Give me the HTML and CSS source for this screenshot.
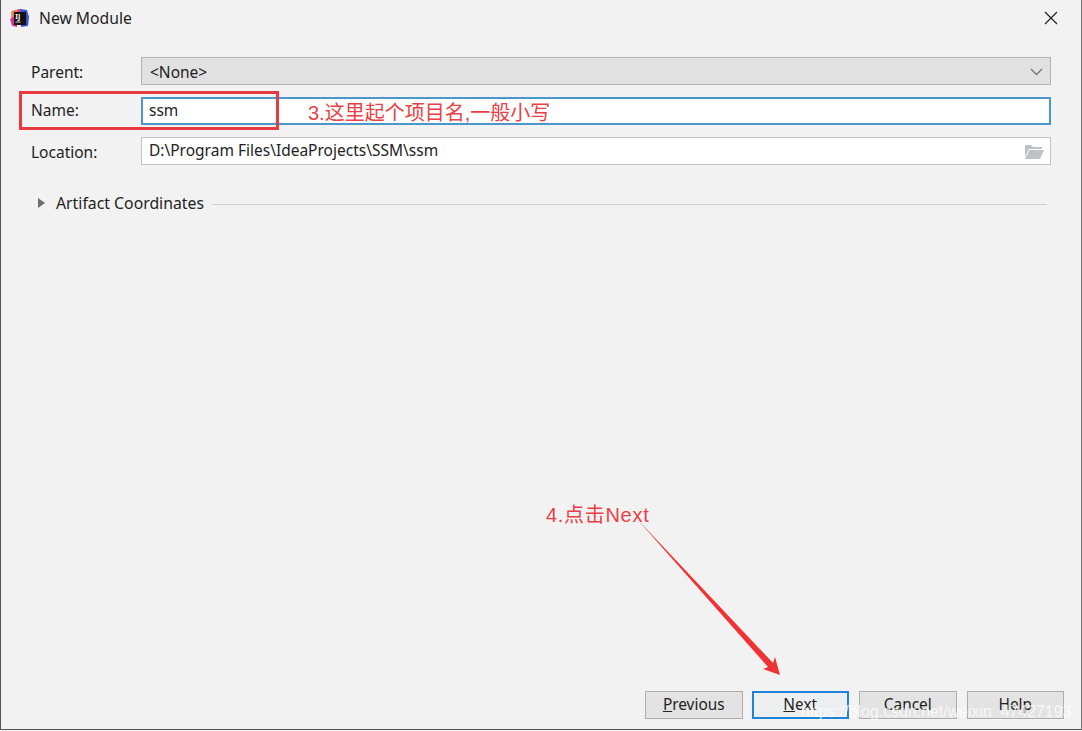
FILE: index.html
```html
<!DOCTYPE html>
<html lang="en">
<head>
    <meta charset="UTF-8">
    <meta name="viewport" content="width=device-width, initial-scale=1.0">
    <title>New Module</title>
    <link rel="stylesheet" href="styles.css">
</head>
<body>
    <div class="dialog">
        <div class="title-bar">
            <svg class="app-icon" width="21" height="21" viewBox="0 0 21 21">
                <path d="M3 3 L11 1 L12 10 L2 13 Z" fill="#f0396e"/>
                <path d="M11 1 L18 2 L20 9 L19 18 L12 19 Z" fill="#3b4fd8"/>
                <path d="M1 11 L8 9 L8 19 L3 18 Z" fill="#d6349a"/>
                <path d="M2 4 L8 2 L9 8 L3 9 Z" fill="#f7873a"/>
                <rect x="5" y="4" width="12" height="13" fill="#111"/>
                <text x="6.2" y="11" class="app-icon-text">IJ</text>
                <rect x="6.5" y="13.5" width="5" height="1" fill="#ddd"/>
            </svg>
            <span class="title">New Module</span>
            <svg class="close" width="14" height="14" viewBox="0 0 14 14">
                <path d="M1 1 L13 13 M13 1 L1 13" stroke="#222" stroke-width="1.2" fill="none"/>
            </svg>
        </div>

        <div class="form">
            <label class="label">Parent:</label>
            <div class="field field-select">
                <span>&lt;None&gt;</span>
                <svg width="13" height="8" viewBox="0 0 13 8">
                    <path d="M1 1 L6.5 6.5 L12 1" stroke="#777" stroke-width="1.4" fill="none"/>
                </svg>
            </div>
            <label class="label label-name">Name:</label>
            <div class="field field-focus"><span>ssm</span></div>
            <label class="label label-low">Location:</label>
            <div class="field">
                <span>D:\Program Files\IdeaProjects\SSM\ssm</span>
                <svg class="folder" width="20" height="15" viewBox="0 0 20 15">
                    <path d="M1 1 L7 1 L9 3 L18 3 L18 5 L5 5 L1 13 Z" fill="#bcc2c5"/>
                    <path d="M5.5 6 L20 6 L16 15 L1 15 Z" fill="#bcc2c5"/>
                </svg>
            </div>
        </div>

        <div class="artifact">
            <span class="triangle"></span>
            <span>Artifact Coordinates</span>
            <span class="rule"></span>
        </div>

        <div class="buttons">
            <button class="btn"><u>P</u>revious</button>
            <button class="btn btn-default"><u>N</u>ext</button>
            <button class="btn">Cancel</button>
            <button class="btn">Help</button>
        </div>
    </div>

    <!-- annotations drawn over the screenshot -->
    <div class="red-box"></div>
    <div class="note note-name">3.这里起个项目名,一般小写</div>
    <div class="note note-next">4.点击Next</div>
    <svg class="arrow" width="1082" height="731" viewBox="0 0 1082 731">
        <path d="M637 519 L773 663 L775 657 L780 675 L763 669 L768 667 Z" fill="#f03232"/>
    </svg>
    <div class="watermark">https://blog.csdn.net/weixin_47427193</div>
</body>
</html>
```

FILE: styles.css
```css
* {
    box-sizing: border-box;
}

body {
    margin: 0;
    width: 1082px;
    height: 731px;
    overflow: hidden;
    background-color: #f2f2f2;
    font-family: "Noto Sans", "Noto Sans CJK SC", sans-serif;
    font-size: 15.5px;
    color: #222222;
}

/* 대화상자 */
.dialog {
    display: flex;
    flex-direction: column;
    width: 1082px;
    height: 730px;
    border-left: 1px solid #555555;
    border-right: 1px solid #777777;
    border-bottom: 1px solid #555555;
    padding-bottom: 10px;
}

.title-bar {
    display: flex;
    align-items: center;
    height: 36px;
    padding: 0 23px 0 8px;
}

.app-icon {
    margin-right: 9px;
}

.app-icon-text {
    font-size: 7px;
    font-weight: bold;
    fill: #ffffff;
}

.title {
    flex: 1;
    font-size: 15.7px;
}

.form {
    display: grid;
    grid-template-columns: 140px 910px;
    grid-auto-rows: 28px;
    row-gap: 12px;
    margin-top: 21px;
}

.label {
    padding-left: 30px;
    line-height: 31px;
}

.label-name {
    line-height: 26px;
}

.field {
    display: flex;
    align-items: center;
    justify-content: space-between;
    padding: 0 7px 2px;
    background: #ffffff;
    border: 1px solid #c4c4c4;
}

.field-select {
    background: #e1e1e1;
    border-color: #b4b4b4;
    padding: 2px 7px 0 8px;
}

.field-focus {
    border: 2px solid #4a97cc;
    padding: 0 6px 2px;
}

.folder {
    margin-right: -1px;
    margin-top: 2px;
}

.artifact {
    display: flex;
    align-items: center;
    height: 20px;
    margin-top: 28px;
    padding-left: 37px;
    font-size: 15.8px;
}

.triangle {
    width: 0;
    height: 0;
    margin-right: 11px;
    border-left: 7px solid #6e6e6e;
    border-top: 5px solid transparent;
    border-bottom: 5px solid transparent;
}

.rule {
    flex: 1;
    height: 1px;
    margin: 2px 34px 0 8px;
    background: #cfcfcf;
}

.buttons {
    display: flex;
    justify-content: flex-end;
    gap: 10px;
    margin-top: auto;
    padding-right: 17px;
}

.btn {
    width: 97.5px;
    height: 28px;
    padding: 0 0 2px;
    background: #e3e3e3;
    border: 1px solid #adadad;
    font-family: inherit;
    font-size: 15.4px;
    color: #222222;
}

.btn-default {
    margin-left: -1px;
    background: #eceef0;
    border: 2px solid #1f84d6;
}

/* 주석 */
.red-box {
    position: absolute;
    left: 19px;
    top: 91px;
    width: 260px;
    height: 39px;
    border: 3px solid #e83a3f;
}

.note {
    position: absolute;
    font-family: "Liberation Sans", "Noto Sans CJK SC", sans-serif;
    font-size: 20px;
    line-height: 26px;
    color: #ea3f45;
    white-space: nowrap;
}

.note-name {
    left: 308px;
    top: 100px;
}

.note-next {
    left: 546px;
    top: 502px;
    letter-spacing: 0.7px;
}

.arrow {
    position: absolute;
    left: 0;
    top: 0;
}

.watermark {
    position: absolute;
    left: 801px;
    top: 702px;
    font-family: "Liberation Sans", sans-serif;
    font-size: 15.9px;
    line-height: 20px;
    color: rgba(255, 255, 255, 0.75);
    white-space: nowrap;
}
```
